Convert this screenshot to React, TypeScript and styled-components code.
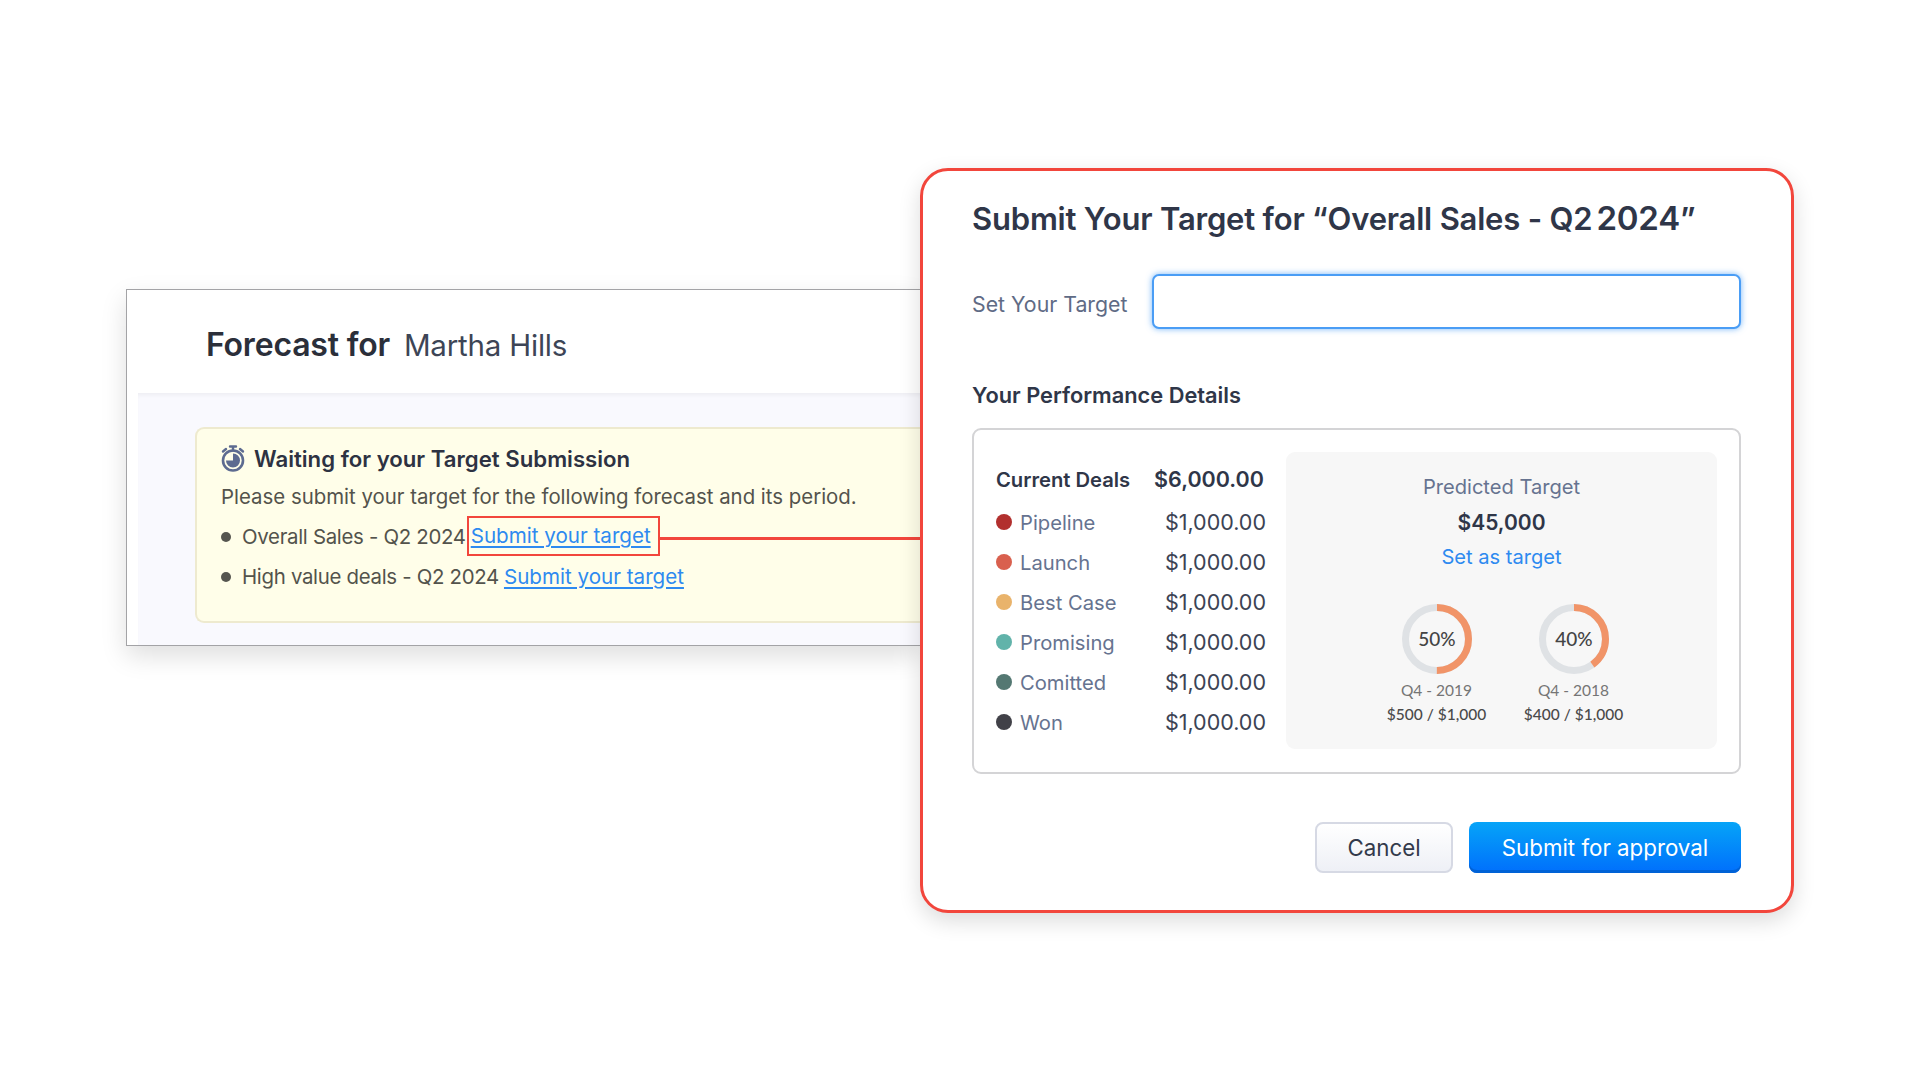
import React from "react";
import styled, { createGlobalStyle } from "styled-components";

const GlobalStyle = createGlobalStyle`
  html, body {
    margin: 0;
    padding: 0;
    background: #fff;
    font-family: Inter, "Noto Sans", sans-serif;
  }
`;

const Stage = styled.div`
  width: 1920px;
  height: 1080px;
  box-sizing: border-box;
  padding: 168px 0 0 126px;
  display: flex;
  align-items: flex-start;
  overflow: hidden;
`;

const ForecastCard = styled.section`
  width: 794px;
  height: 357px;
  margin-top: 121px;
  box-sizing: border-box;
  border: 1px solid #a3a3a6;
  border-right: 0;
  background: #fff;
  box-shadow: 0 10px 24px rgba(0, 0, 0, 0.13);
  display: flex;
  flex-direction: column;
`;

const ForecastHeader = styled.header`
  height: 103px;
  flex: none;
  box-sizing: border-box;
  padding: 6px 0 0 79px;
  display: flex;
  align-items: center;
  gap: 14px;
  color: #2b2f3a;
`;

const ForecastTitle = styled.h1`
  margin: 0;
  font-size: 32px;
  font-weight: 600;
  letter-spacing: -0.2px;
`;

const ForecastName = styled.span`
  font-size: 29.5px;
  font-weight: 400;
  color: #3d4556;
  letter-spacing: -0.2px;
`;

const Band = styled.div`
  flex: 1;
  margin-left: 11px;
  padding: 34px 0 22px 57px;
  background: #f9f9fe;
  box-shadow: inset 0 4px 4px -2px rgba(0, 0, 0, 0.05);
  display: flex;
`;

const Notice = styled.div`
  flex: 1;
  box-sizing: border-box;
  padding: 13px 0 0 24px;
  background: #fffee9;
  border: 2px solid #eeeacf;
  border-right: 0;
  border-radius: 9px 0 0 9px;
  color: #53534c;
  font-size: 20.4px;
`;

const NoticeTitle = styled.div`
  display: flex;
  align-items: center;
  gap: 9px;
  height: 32px;
  font-size: 22.2px;
  font-weight: 600;
  color: #2d3242;
`;

const NoticeText = styled.div`
  height: 40px;
  margin-top: 2px;
  display: flex;
  align-items: center;
`;

const ForecastRow = styled.div`
  height: 40px;
  display: flex;
  align-items: center;
  white-space: nowrap;
  letter-spacing: -0.3px;
`;

const Bullet = styled.span`
  width: 10px;
  height: 10px;
  margin: 2px 11px 0 0;
  border-radius: 50%;
  background: #55554f;
  flex: none;
`;

const TargetLink = styled.a<{ $boxed?: boolean }>`
  color: #2e8af0;
  font-size: 20.6px;
  letter-spacing: 0;
  text-decoration: underline;
  text-underline-offset: 3px;
  margin-left: 5px;
  ${(p) =>
    p.$boxed &&
    `
    margin-left: 1px;
    padding: 0 7px 0 2px;
    height: 40px;
    line-height: 36px;
    box-sizing: border-box;
    border: 2px solid #f2463c;
  `}
`;

const Connector = styled.span`
  flex: 1;
  height: 3px;
  margin-top: 4px;
  background: #f2463c;
`;

const Modal = styled.section`
  width: 874px;
  height: 745px;
  flex: none;
  box-sizing: border-box;
  padding: 27px 50px 0 49px;
  background: #fff;
  border: 3px solid #f2463c;
  border-radius: 28px;
  box-shadow: 0 8px 22px rgba(0, 0, 0, 0.14);
  color: #2f3648;
`;

const ModalTitle = styled.h2`
  margin: 0;
  height: 40px;
  line-height: 40px;
  font-size: 31px;
  font-weight: 600;
  letter-spacing: -0.2px;
  white-space: nowrap;
`;

const Year = styled.span`
  font-size: 33px;
  margin-left: 4px;
`;

const TargetRow = styled.div`
  margin-top: 36px;
  display: flex;
  align-items: center;
  gap: 25px;
`;

const TargetLabel = styled.label`
  font-size: 21.3px;
  color: #5f6b85;
  white-space: nowrap;
  padding-top: 4px;
`;

const TargetInput = styled.input`
  flex: 1;
  min-width: 0;
  height: 55px;
  box-sizing: border-box;
  border: 2px solid #4a9df5;
  border-radius: 7px;
  outline: none;
  background: #fff;
  box-shadow: 0 0 6px rgba(74, 157, 245, 0.75);
`;

const SectionTitle = styled.h3`
  margin: 50px 0 0;
  height: 32px;
  line-height: 32px;
  font-size: 21.8px;
  font-weight: 600;
  color: #2f3648;
`;

const DetailsBox = styled.div`
  margin-top: 17px;
  height: 346px;
  box-sizing: border-box;
  border: 2px solid #d4d4d6;
  border-radius: 9px;
  padding: 22px 22px 23px 22px;
  display: flex;
`;

const DealList = styled.div`
  width: 270px;
  padding-top: 7px;
  flex: none;
`;

const DealRow = styled.div<{ $head?: boolean }>`
  height: 40px;
  display: flex;
  align-items: center;
  font-size: 20.2px;
  white-space: nowrap;
  margin-bottom: ${(p) => (p.$head ? "3px" : "0")};
  font-weight: ${(p) => (p.$head ? 600 : 400)};
`;

const Dot = styled.span<{ $color: string }>`
  width: 16px;
  height: 16px;
  margin-right: 8px;
  border-radius: 50%;
  flex: none;
  background: ${(p) => p.$color};
`;

const DealName = styled.span`
  color: #667390;
`;

const DealValue = styled.span<{ $head?: boolean }>`
  margin-left: auto;
  font-size: 21.5px;
  margin-right: ${(p) => (p.$head ? "2px" : "0")};
  color: ${(p) => (p.$head ? "#2f3648" : "#3c4354")};
`;

const PredictPanel = styled.div`
  width: 431px;
  flex: none;
  margin-left: 20px;
  box-sizing: border-box;
  padding-top: 18px;
  background: #f7f7f7;
  border-radius: 9px;
  display: flex;
  flex-direction: column;
  align-items: center;
`;

const PredictLine = styled.div<{ $tone?: "label" | "value" | "link" }>`
  height: 35px;
  line-height: 35px;
  font-size: ${(p) => (p.$tone === "value" ? "21px" : "20.1px")};
  font-weight: ${(p) => (p.$tone === "value" ? 600 : 400)};
  color: ${(p) =>
    p.$tone === "value" ? "#2f3648" : p.$tone === "link" ? "#2e8af0" : "#667390"};
`;

const Rings = styled.div`
  margin: 28px 0 0 7px;
  display: flex;
  gap: 37px;
`;

const RingItem = styled.div`
  width: 100px;
  display: flex;
  flex-direction: column;
  align-items: center;
  font-family: Lato, sans-serif;
  font-size: 15.5px;
  white-space: nowrap;
`;

const RingLabels = styled.div`
  margin-top: 3px;
  text-align: center;
`;

const RingCaption = styled.div<{ $strong?: boolean }>`
  height: 24px;
  line-height: 24px;
  color: ${(p) => (p.$strong ? "#4a4a4a" : "#757575")};
  font-weight: ${(p) => (p.$strong ? 500 : 400)};
`;

const Actions = styled.div`
  margin-top: 48px;
  display: flex;
  justify-content: flex-end;
  gap: 16px;
`;

const Button = styled.button<{ $primary?: boolean }>`
  height: 51px;
  box-sizing: border-box;
  border-radius: 8px;
  font-family: inherit;
  font-size: 22.3px;
  padding: 0;
  cursor: pointer;
  width: ${(p) => (p.$primary ? "272px" : "138px")};
  color: ${(p) => (p.$primary ? "#fff" : "#333a4b")};
  border: ${(p) => (p.$primary ? "0" : "2px solid #d6d9e4")};
  background: ${(p) =>
    p.$primary
      ? "linear-gradient(#06a4f8, #006ffc)"
      : "linear-gradient(#fff, #eef0f6)"};
  box-shadow: ${(p) => (p.$primary ? "inset 0 -3px 0 #0062d6" : "none")};
`;

const Stopwatch = () => (
  <svg width="24" height="27" viewBox="0 0 24 27" fill="none">
    <path d="M9 1.5h6M12 1.5v4" stroke="#5d6b90" strokeWidth="2.4" strokeLinecap="round" />
    <path d="M2 6.5l3 -2.5M22 6.5l-3 -2.5" stroke="#5d6b90" strokeWidth="2.4" strokeLinecap="round" />
    <circle cx="12" cy="15.5" r="10" stroke="#5d6b90" strokeWidth="2.6" />
    <path d="M12 8.5a7 7 0 1 1 -7 7h7z" fill="#5d6b90" />
  </svg>
);

const Ring = ({ percent }: { percent: number }) => {
  const r = 31.5;
  const c = 2 * Math.PI * r;
  return (
    <svg width="72" height="72" viewBox="0 0 72 72">
      <circle cx="36" cy="36" r={r} fill="none" stroke="#dfe2e5" strokeWidth="7" />
      <circle
        cx="36"
        cy="36"
        r={r}
        fill="none"
        stroke="#f19468"
        strokeWidth="7"
        strokeDasharray={`${(c * percent) / 100} ${c}`}
        transform="rotate(-90 36 36)"
      />
      <text
        x="36"
        y="42.5"
        textAnchor="middle"
        fontFamily="Lato, sans-serif"
        fontSize="19"
        fontWeight="500"
        fill="#444"
      >
        {percent}%
      </text>
    </svg>
  );
};

const deals = [
  { name: "Pipeline", color: "#b2302e" },
  { name: "Launch", color: "#d9604e" },
  { name: "Best Case", color: "#e9b36b" },
  { name: "Promising", color: "#61b3aa" },
  { name: "Comitted", color: "#547872" },
  { name: "Won", color: "#414148" },
];

const rings = [
  { percent: 50, period: "Q4 - 2019", amount: "$500 / $1,000" },
  { percent: 40, period: "Q4 - 2018", amount: "$400 / $1,000" },
];

const App: React.FC = () => {
  return (
    <>
      <GlobalStyle />
      <Stage>
        <ForecastCard>
          <ForecastHeader>
            <ForecastTitle>Forecast for</ForecastTitle>
            <ForecastName>Martha Hills</ForecastName>
          </ForecastHeader>
          <Band>
            <Notice>
              <NoticeTitle>
                <Stopwatch />
                Waiting for your Target Submission
              </NoticeTitle>
              <NoticeText>Please submit your target for the following forecast and its period.</NoticeText>
              <ForecastRow>
                <Bullet />
                Overall Sales - Q2 2024
                <TargetLink $boxed>Submit your target</TargetLink>
                <Connector />
              </ForecastRow>
              <ForecastRow>
                <Bullet />
                High value deals - Q2 2024
                <TargetLink>Submit your target</TargetLink>
              </ForecastRow>
            </Notice>
          </Band>
        </ForecastCard>

        <Modal>
          <ModalTitle>
            Submit Your Target for “Overall Sales - Q2<Year>2024</Year>”
          </ModalTitle>
          <TargetRow>
            <TargetLabel>Set Your Target</TargetLabel>
            <TargetInput type="text" />
          </TargetRow>
          <SectionTitle>Your Performance Details</SectionTitle>
          <DetailsBox>
            <DealList>
              <DealRow $head>
                Current Deals
                <DealValue $head>$6,000.00</DealValue>
              </DealRow>
              {deals.map((d) => (
                <DealRow key={d.name}>
                  <Dot $color={d.color} />
                  <DealName>{d.name}</DealName>
                  <DealValue>$1,000.00</DealValue>
                </DealRow>
              ))}
            </DealList>
            <PredictPanel>
              <PredictLine $tone="label">Predicted Target</PredictLine>
              <PredictLine $tone="value">$45,000</PredictLine>
              <PredictLine $tone="link">Set as target</PredictLine>
              <Rings>
                {rings.map((r) => (
                  <RingItem key={r.period}>
                    <Ring percent={r.percent} />
                    <RingLabels>
                      <RingCaption>{r.period}</RingCaption>
                      <RingCaption $strong>{r.amount}</RingCaption>
                    </RingLabels>
                  </RingItem>
                ))}
              </Rings>
            </PredictPanel>
          </DetailsBox>
          <Actions>
            <Button>Cancel</Button>
            <Button $primary>Submit for approval</Button>
          </Actions>
        </Modal>
      </Stage>
    </>
  );
};

export default App;
